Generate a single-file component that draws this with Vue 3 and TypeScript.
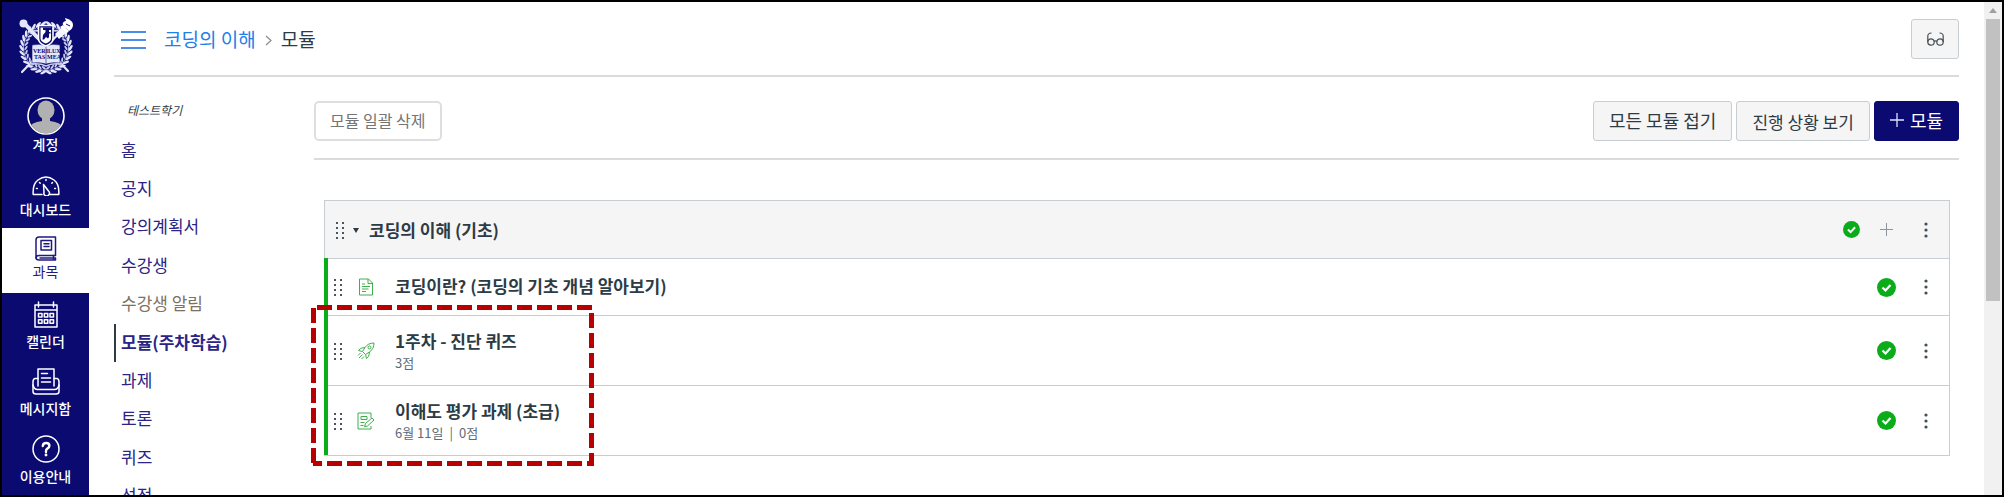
<script setup lang="ts">
interface GlobalItem {
  id: string
  label: string
  active?: boolean
}
interface CourseLink {
  label: string
  state?: 'active' | 'hidden'
}
interface ModuleItem {
  kind: 'page' | 'quiz' | 'assignment'
  title: string
  meta: string[]
}

const globalItems: GlobalItem[] = [
  { id: 'account', label: '계정' },
  { id: 'dashboard', label: '대시보드' },
  { id: 'courses', label: '과목', active: true },
  { id: 'calendar', label: '캘린더' },
  { id: 'inbox', label: '메시지함' },
  { id: 'help', label: '이용안내' },
]

const courseLinks: CourseLink[] = [
  { label: '홈' },
  { label: '공지' },
  { label: '강의계획서' },
  { label: '수강생' },
  { label: '수강생 알림', state: 'hidden' },
  { label: '모듈(주차학습)', state: 'active' },
  { label: '과제' },
  { label: '토론' },
  { label: '퀴즈' },
  { label: '성적' },
]

const moduleItems: ModuleItem[] = [
  { kind: 'page', title: '코딩이란? (코딩의 기초 개념 알아보기)', meta: [] },
  { kind: 'quiz', title: '1주차 - 진단 퀴즈', meta: ['3점'] },
  { kind: 'assignment', title: '이해도 평가 과제 (초급)', meta: ['6월 11일', '0점'] },
]

/* Laurel leaves of the crest, in degrees clockwise from the top */
const leaves: number[] = Array.from({ length: 30 }, (_, i) => 6 + i * 12)
const leafTilt = (a: number): number => (a < 180 ? -1 : 1)
</script>

<template>
  <div class="frame">
    <nav class="global" aria-label="전체 메뉴">
      <a class="crest" href="#" aria-label="홈으로">
        <svg width="56" height="58" viewBox="0 0 56 58" fill="none">
          <g stroke="#e4e6fa" stroke-width="2.2" stroke-linecap="round">
            <path d="M6 7 50 54M49 8 4 55" />
          </g>
          <circle cx="28" cy="31" r="22.5" stroke="#aeb2e6" stroke-width="1" />
          <g v-for="a in leaves" :key="a" :transform="`rotate(${a} 28 31)`">
            <ellipse cx="28" cy="6.5" rx="3.4" ry="1.3" fill="#e4e6fa" :transform="`rotate(${leafTilt(a) * -32} 28 6.5)`" />
            <ellipse cx="28" cy="11" rx="2.6" ry="1" fill="#c8cbf0" :transform="`rotate(${leafTilt(a) * 32} 28 11)`" />
          </g>
          <circle cx="5.500" cy="6.500" r="4" fill="#e4e6fa" />
          <path d="m8 8 12 13" stroke="#e4e6fa" stroke-width="4" />
          <path d="m37 17 7-7 5 5-8 7Z" fill="#f4f5ff" />
          <path d="m42 10 3-2 6 6-2 2Z" fill="#fff" />
          <path d="M45 8c-1-3 2-4 3-4 0-1-1-2-1-3 4 1 8 3 8 7 0 3-2 5-4 6Z" fill="#fff" />
          <path d="m48 7 4 2" stroke="#0a0a70" />
          <path d="M14 28q8-2 14 1 6-3 14-1v18q-8-1-14 1-6-2-14-1Z" fill="#e4e6fa" stroke="#0a0a70" stroke-width=".6" />
          <path d="M13 47q9-1 15 2 6-3 15-2" stroke="#c8cbf0" stroke-width="1.400" />
          <path d="M28 29v18" stroke="#6468b0" />
          <g class="motto" fill="#0a0a70">
            <text x="15" y="36">VERI</text>
            <text x="30" y="36">LUX</text>
            <text x="16" y="42">TAS</text>
            <text x="29" y="42">MEA</text>
          </g>
          <path d="M20.500 8.500h14.500v13q0 5-7.200 7.500-7.300-2.500-7.300-7.500Z" fill="#0a0a70" stroke="#fff" stroke-width="1.600" />
          <path d="M22.500 10.500h10.500v11q0 3-5.200 5-5.300-2-5.300-5Z" fill="#fff" />
          <path d="M25 10.500h8v2.500h-2v2h1.500v1.500H31V20l-1 1.500-2-1.500-2 2.500h-1.500l.500-4.500 2.500-3v-2H25Z" fill="#0a0a70" />
        </svg>
      </a>
      <a
        v-for="item in globalItems"
        :key="item.id"
        href="#"
        class="global-item"
        :class="[item.id, { active: item.active }]"
      >
        <svg v-if="item.id === 'account'" width="38" height="38" viewBox="0 0 38 38">
          <clipPath id="avatar"><circle cx="19" cy="19" r="17.500" /></clipPath>
          <circle cx="19" cy="19" r="18" fill="#0a0a70" stroke="#fff" stroke-width="1.600" />
          <g clip-path="url(#avatar)" fill="#b1b1b1">
            <ellipse cx="19" cy="13" rx="8.500" ry="9.500" />
            <path d="M15 18h8v6q11 1 14 8v7H1v-7q3-7 14-8Z" />
          </g>
        </svg>
        <svg v-else-if="item.id === 'dashboard'" width="28" height="20" viewBox="0 0 28 20" class="line-icon">
          <path d="M10 18.500H1.200Q.5 8 6 4q8-6 16 0 5.500 4 4.800 14.500H18" />
          <path d="M11.500 8.500 16.500 15a2.800 2.800 0 1 1-4.500 1.200Z" />
          <path d="M14 3.500v1M7.500 6.500l.700.700M20.500 6.500l-.7.700M4.500 12.500h.8M23.500 12.500h-.8" />
        </svg>
        <svg v-else-if="item.id === 'courses'" width="22" height="25" viewBox="0 0 22 25" class="line-icon">
          <path d="M4 1h16.500v18.500H4Q1 19.500 1 22V4Q1 1 4 1Z" />
          <path d="M1 21.500Q1 24 4 24h16.500v-2H5M18.500 19.500v4" />
          <path d="M6 4.500h10.500v9.500H6ZM9 7.800h5M9 10.500h5" />
        </svg>
        <svg v-else-if="item.id === 'calendar'" width="24" height="27" viewBox="0 0 24 27" class="line-icon">
          <path d="M1 4h22v22H1ZM1 9h22M4.500 1v5M19.500 1v5" />
          <path d="M4.500 12.500h3.500v3.500H4.500ZM10.300 12.500h3.500v3.500h-3.500ZM16 12.500h3.500v3.500H16ZM4.500 18.700h3.500v3.500H4.500ZM10.300 18.700h3.500v3.500h-3.500ZM16 18.700h3.500v3.500H16Z" />
        </svg>
        <svg v-else-if="item.id === 'inbox'" width="28" height="27" viewBox="0 0 28 27" class="line-icon">
          <path d="M6 18V1h16v17M9.500 5.500h6M9.500 10h9M9.500 14h9" />
          <path d="M6 10.500H3Q1 11 1 14v9.500Q1 26 4 26h20q3 0 3-2.500V14q0-3-2-3.500h-3" />
          <path d="M1 17q1 4.500 4.500 4.500h17q3.500 0 4.500-4.500" />
        </svg>
        <svg v-else width="28" height="28" viewBox="0 0 28 28" class="line-icon">
          <circle cx="14" cy="14" r="13" />
          <path d="M10.800 11q.2-3 3.400-3t3.200 2.800q0 1.600-1.800 2.600T14 16v1" stroke-width="2.400" />
          <circle cx="14" cy="20" r=".7" />
        </svg>
        <span>{{ item.label }}</span>
      </a>
    </nav>

    <div class="page">
      <header class="topbar">
        <button type="button" class="menu-toggle" aria-label="과목 메뉴">
          <span></span><span></span><span></span>
        </button>
        <a href="#" class="crumb">코딩의 이해</a>
        <svg class="sep" width="7" height="11" viewBox="0 0 7 11" fill="none" stroke="#8b9196" stroke-width="1.300">
          <path d="m1 1 5 4.500-5 4.500" />
        </svg>
        <span class="here">모듈</span>
        <button type="button" class="btn student-view" aria-label="학생 보기">
          <svg width="17" height="14" viewBox="0 0 17 14" fill="none" stroke="#444f57" stroke-width="1.200">
            <circle cx="4" cy="10" r="3.200" />
            <circle cx="13" cy="10" r="3.200" />
            <path d="M7 9.500q1.500-1.200 3 0M.8 10V4Q1 1 4.500 1M16.200 10V4Q16 1 12.500 1" />
          </svg>
        </button>
      </header>

      <div class="columns">
        <aside class="course-nav">
          <p class="term">테스트학기</p>
          <ul>
            <li v-for="link in courseLinks" :key="link.label">
              <a href="#" :class="link.state">{{ link.label }}</a>
            </li>
          </ul>
        </aside>

        <main class="content">
          <div class="toolbar">
            <button type="button" class="btn bulk-delete">모듈 일괄 삭제</button>
            <div class="actions">
              <button type="button" class="btn">모든 모듈 접기</button>
              <button type="button" class="btn progress">진행 상황 보기</button>
              <button type="button" class="btn primary">
                <svg width="14" height="14" viewBox="0 0 14 14" stroke="#dfe4ff" stroke-width="1.300"><path d="M7 0v14M0 7h14" /></svg>
                모듈
              </button>
            </div>
          </div>

          <section class="module">
            <div class="module-head">
              <svg class="grip" width="8" height="18" viewBox="0 0 8 18"><path d="M1 1v17M7 1v17" /></svg>
              <svg class="caret" width="6" height="5" viewBox="0 0 6 5"><path d="M0 0h6L3 5Z" fill="#2d3b45" /></svg>
              <h2>코딩의 이해 (기초)</h2>
              <div class="controls">
                <button type="button" aria-label="게시됨">
                  <svg width="17" height="17" viewBox="0 0 19 19"><circle cx="9.500" cy="9.500" r="9.500" fill="#0aad19" /><path d="m5.500 9.500 3 3 5-5.500" fill="none" stroke="#fff" stroke-width="2.200" /></svg>
                </button>
                <button type="button" aria-label="항목 추가">
                  <svg width="13" height="13" viewBox="0 0 13 13" stroke="#8d959b"><path d="M6.500 0v13M0 6.500h13" /></svg>
                </button>
                <button type="button" class="more" aria-label="모듈 설정">
                  <svg width="4" height="16" viewBox="0 0 4 16" fill="#444f57"><circle cx="2" cy="2" r="1.600" /><circle cx="2" cy="8" r="1.600" /><circle cx="2" cy="14" r="1.600" /></svg>
                </button>
              </div>
            </div>

            <ul class="items">
              <li v-for="item in moduleItems" :key="item.title" :class="{ tall: item.meta.length }">
                <svg class="grip" width="8" height="18" viewBox="0 0 8 18"><path d="M1 1v17M7 1v17" /></svg>
                <svg class="kind" width="18" height="18" viewBox="0 0 18 18">
                  <path v-if="item.kind === 'page'" d="M2.500 1h9l4 4v12h-13ZM11 1v4.500h4.500M5 6h3M5 8.500h8M5 11h6.500M5 13.500h4" />
                  <g v-else-if="item.kind === 'quiz'">
                    <path d="M17 1q-6 0-9 4.500L5.500 9.500l3 3 4-2.500Q17 7 17 1ZM8 5.500Q3 5.500 1.500 8.500l4 1M12.500 10q0 5-3 6.500l-1-4" />
                    <path d="M1 13.500 3.500 11M2 16l3.500-3.500M4.500 17 7 14.500" />
                    <circle cx="12.500" cy="5.500" r="1.500" />
                  </g>
                  <g v-else>
                    <path d="M14 6V1H1v16h13v-3M4 4.500h6v3H4ZM3.500 10.500h4M3.500 13.500h3" />
                    <path d="M8.500 11.500 15 6l2 2-6.500 6-3 .8Z" />
                  </g>
                </svg>
                <div class="text">
                  <a href="#" class="title">{{ item.title }}</a>
                  <p v-if="item.meta.length" class="meta">
                    <span v-for="m in item.meta" :key="m">{{ m }}</span>
                  </p>
                </div>
                <div class="controls">
                  <button type="button" aria-label="게시됨">
                    <svg width="19" height="19" viewBox="0 0 19 19"><circle cx="9.500" cy="9.500" r="9.500" fill="#0aad19" /><path d="m5.500 9.500 3 3 5-5.500" fill="none" stroke="#fff" stroke-width="2.200" /></svg>
                  </button>
                  <button type="button" class="more" aria-label="항목 설정">
                    <svg width="4" height="16" viewBox="0 0 4 16" fill="#444f57"><circle cx="2" cy="2" r="1.600" /><circle cx="2" cy="8" r="1.600" /><circle cx="2" cy="14" r="1.600" /></svg>
                  </button>
                </div>
              </li>
            </ul>

            <svg class="callout" width="283" height="161" viewBox="0 0 283 161" aria-hidden="true">
              <g fill="none" stroke="#b90000" stroke-width="5">
                <path d="M6 2.500H283" />
                <path d="M2.500 3V160" />
                <path d="M280.500 8V161" />
                <path d="M2 158.500H283" stroke-dashoffset="6" />
              </g>
            </svg>
          </section>
        </main>
      </div>
    </div>

    <div class="scrollbar" aria-hidden="true">
      <svg width="8" height="5" viewBox="0 0 8 5"><path d="M0 5 4 0l4 5Z" fill="#a0a0a0" /></svg>
      <div class="thumb"></div>
    </div>
  </div>
</template>

<style>
html,
body {
  margin: 0;
  overflow: hidden;
}
</style>

<style scoped>
.frame,
.frame * {
  box-sizing: border-box;
}
.frame {
  display: flex;
  height: 100vh;
  overflow: hidden;
  border: 2px solid #000;
  background: #fff;
  color: #2d3b45;
  font-family: "Noto Sans CJK KR", "Noto Sans", sans-serif;
  font-size: 17px;
}
.frame svg {
  display: block;
  flex: none;
}
a {
  color: inherit;
  text-decoration: none;
}
button {
  font: inherit;
  color: inherit;
  cursor: pointer;
}
ul,
p,
h2 {
  margin: 0;
  padding: 0;
  list-style: none;
}

/* Global navigation */
.global {
  flex: none;
  width: 87px;
  background: #0a0a70;
  color: #fff;
}
.crest {
  display: flex;
  justify-content: center;
  height: 87px;
  padding-top: 15px;
}
.motto {
  font: bold 6px "Liberation Serif", serif;
}
.global-item {
  display: flex;
  flex-direction: column;
  align-items: center;
  gap: 3px;
  padding: 8px 0 9px;
  font-size: 14px;
  font-weight: 500;
  line-height: 20px;
}
.global-item.account {
  gap: 0;
  padding-bottom: 15px;
  line-height: 18px;
}
.global-item.active {
  gap: 0;
  padding-bottom: 12px;
  background: #fff;
  color: #1f1a80;
  font-weight: 400;
}
.line-icon {
  fill: none;
  stroke: currentColor;
  stroke-width: 1.5;
  stroke-linecap: round;
  stroke-linejoin: round;
}

/* Page */
.page {
  flex: 1;
  min-width: 0;
  padding: 0 25px;
}
.topbar {
  display: flex;
  align-items: center;
  height: 75px;
  border-bottom: 2px solid #d9dcde;
  font-size: 19px;
  line-height: 28px;
}
.menu-toggle {
  display: grid;
  gap: 6px;
  width: 25px;
  margin: 2px 18px 0 7px;
  padding: 0;
  border: 0;
  background: none;
}
.menu-toggle span {
  height: 2px;
  background: #4a8ce8;
}
.crumb {
  color: #2080e8;
}
.sep {
  margin: 4px 9px 0;
}
.btn {
  height: 40px;
  padding: 0 15px 3px;
  border: 1px solid #c7cdd1;
  border-radius: 3px;
  background: #f5f5f5;
  font-size: 18px;
}
.student-view {
  width: 48px;
  margin-left: auto;
  padding: 0 15px;
}
.columns {
  display: flex;
}
.course-nav {
  flex: none;
  width: 200px;
}
.term {
  padding: 23px 0 12px 13px;
  font-size: 12px;
  font-style: italic;
  line-height: 20px;
}
.course-nav ul {
  display: grid;
  grid-auto-rows: 1fr;
  height: 384px;
}
.course-nav a {
  display: flex;
  align-items: center;
  height: 100%;
  padding: 0 0 4px 7px;
  color: #2a2486;
}
.course-nav a.hidden {
  color: #7d7262;
}
.course-nav a.active {
  padding-left: 5px;
  border-left: 2px solid #2d3b45;
  font-weight: 700;
}

/* Content */
.content {
  flex: 1;
  min-width: 0;
}
.toolbar {
  display: flex;
  justify-content: space-between;
  padding: 24px 0 17px;
  border-bottom: 2px solid #d9dcde;
}
.actions {
  display: flex;
  gap: 4px;
}
.bulk-delete {
  padding: 0 14px 3px;
  border: 2px solid #dedede;
  border-radius: 5px;
  background: #fff;
  color: #757575;
  font-size: 16px;
}
.progress {
  padding-bottom: 0;
  font-size: 17px;
}
.primary {
  display: flex;
  align-items: center;
  gap: 6px;
  border-color: #0a0a70;
  background: #0a0a70;
  color: #fff;
}
.module {
  position: relative;
  margin: 40px 9px 0 10px;
  border: 1px solid #c7cdd1;
}
.module-head {
  display: flex;
  align-items: center;
  height: 57px;
  padding: 0 21px 0 11px;
  background: #f5f5f5;
}
.grip path {
  fill: none;
  stroke: #4a5560;
  stroke-width: 2;
  stroke-dasharray: 2 3;
}
.caret {
  margin: 2px 10px 0 9px;
}
h2,
.title {
  font-size: 17px;
  font-weight: 700;
  line-height: 26px;
}
.controls {
  display: flex;
  align-items: center;
  gap: 20px;
  margin-left: auto;
}
.controls button {
  padding: 0;
  border: 0;
  background: none;
}
.controls .more {
  margin-left: 8px;
}
.module-head .more {
  margin-left: 11px;
}
.items {
  margin-left: -1px;
  border-left: 4px solid #0aad19;
}
.items li {
  display: flex;
  align-items: center;
  height: 57px;
  padding: 0 21px 0 6px;
  border-top: 1px solid #c7cdd1;
}
.items li.tall {
  height: 70px;
}
.text {
  padding-bottom: 2px;
}
.kind {
  margin: 0 20px 0 15px;
  fill: none;
  stroke: #3fae4c;
}
.meta {
  display: flex;
  font-size: 13px;
  line-height: 18px;
  color: #5d6b75;
}
.meta span + span::before {
  content: "|";
  margin: 0 6px;
}
.callout {
  position: absolute;
  top: 104px;
  left: -14px;
  pointer-events: none;
}
.callout path {
  stroke-dasharray: 15 5;
}

/* Scrollbar */
.scrollbar {
  display: flex;
  flex: none;
  flex-direction: column;
  align-items: center;
  gap: 6px;
  width: 18px;
  padding-top: 6px;
  background: #f1f1f1;
}
.thumb {
  width: 14px;
  height: 58%;
  background: #c1c1c1;
}
</style>
